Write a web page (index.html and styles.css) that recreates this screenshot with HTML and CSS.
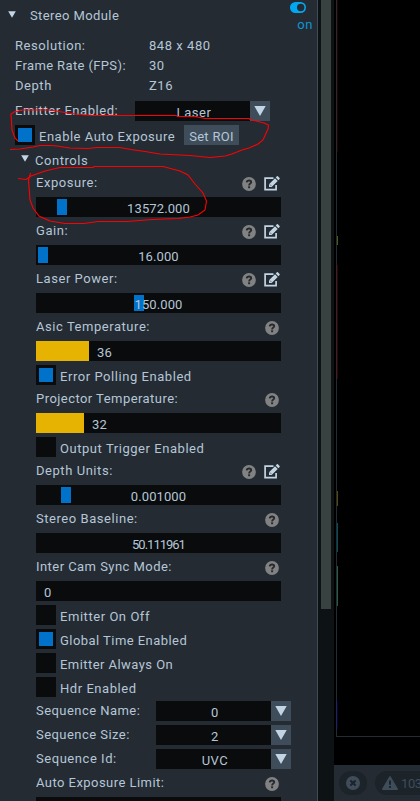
FILE: index.html
```html
<!DOCTYPE html>
<html lang="en">
<head>
<meta charset="utf-8">
<title>Stereo Module</title>
<link rel="stylesheet" href="styles.css">
</head>
<body>
<svg class="defs" aria-hidden="true">
  <symbol id="help" viewBox="0 0 14 14"><circle cx="7" cy="7" r="6.9" fill="#828282"/><path d="M4.700 5.400C4.900 3.900 5.800 3.500 7 3.500C8.300 3.500 9.200 4.200 9.200 5.200C9.200 6.600 7.100 6.500 7.100 8.400" fill="none" stroke="#242b33" stroke-width="1.900"/><path d="M6.100 9.300h2v1.900h-2z" fill="#242b33"/></symbol>
  <symbol id="edit" viewBox="0 0 16 15"><path d="M9.500 2.200H1.100v11.400h11V9" fill="none" stroke="#c3d5e5" stroke-width="1.700"/><path d="M5 8.200l6-6 2.700 2.700-6 6H5zM11.700 1.500l1.200-1.200q.5-.4 1 0l1.700 1.700q.4.500 0 1l-1.200 1.200z" fill="#c3d5e5"/><path d="M5.800 8.400l1.700 1.700" stroke="#242b33" stroke-width=".6"/></symbol>
  <symbol id="down" viewBox="0 0 12 10"><path d="M.3 0h11.400L6 10z" fill="#c3d5e5"/></symbol>
</svg>
<div class="app">
  <main class="panel">
    <header class="title"><svg class="tri"><use href="#down"/></svg><span class="name">Stereo Module</span>
      <div class="power"><svg viewBox="0 0 16 11"><rect width="16" height="11" rx="5.500" fill="#00a8f3"/><circle cx="10.700" cy="5.500" r="3.700" fill="#242b33"/></svg><span>on</span></div>
    </header>
    <dl class="info">
      <dt>Resolution:</dt><dd>848 x 480</dd>
      <dt class="fps">Frame Rate (FPS):</dt><dd>30</dd>
      <dt>Depth</dt><dd>Z16</dd>
    </dl>
    <div class="row emitter"><span class="label">Emitter Enabled:</span><div class="combo"><span>Laser</span><i><svg><use href="#down"/></svg></i></div></div>
    <div class="row check auto"><b class="box on"></b><span>Enable Auto Exposure</span><button>Set ROI</button></div>
    <div class="section"><svg class="tri"><use href="#down"/></svg><span>Controls</span></div>
    <section class="controls">
      <div class="row"><span class="label">Exposure:</span><svg class="help"><use href="#help"/></svg><svg class="edit"><use href="#edit"/></svg></div>
      <div class="row"><div class="bar"><em class="knob exposure"></em><span>13572.000</span></div></div>
      <div class="row"><span class="label">Gain:</span><svg class="help"><use href="#help"/></svg><svg class="edit"><use href="#edit"/></svg></div>
      <div class="row"><div class="bar"><em class="knob gain"></em><span>16.000</span></div></div>
      <div class="row"><span class="label">Laser Power:</span><svg class="help"><use href="#help"/></svg><svg class="edit"><use href="#edit"/></svg></div>
      <div class="row"><div class="bar"><em class="knob laser"></em><span>150.000</span></div></div>
      <div class="row"><span class="label">Asic Temperature:</span><svg class="help"><use href="#help"/></svg></div>
      <div class="row"><div class="bar meter"><em class="fill asic"></em><span>36</span></div></div>
      <div class="row check"><b class="box on"></b><span>Error Polling Enabled</span></div>
      <div class="row"><span class="label tight">Projector Temperature:</span><svg class="help"><use href="#help"/></svg></div>
      <div class="row"><div class="bar meter"><em class="fill projector"></em><span>32</span></div></div>
      <div class="row check"><b class="box"></b><span>Output Trigger Enabled</span></div>
      <div class="row"><span class="label">Depth Units:</span><svg class="help"><use href="#help"/></svg><svg class="edit"><use href="#edit"/></svg></div>
      <div class="row"><div class="bar"><em class="knob units"></em><span>0.001000</span></div></div>
      <div class="row"><span class="label">Stereo Baseline:</span><svg class="help"><use href="#help"/></svg></div>
      <div class="row"><div class="bar"><span class="baseline">50.111961</span></div></div>
      <div class="row"><span class="label tight">Inter Cam Sync Mode:</span><svg class="help"><use href="#help"/></svg></div>
      <div class="row"><div class="bar meter"><span>0</span></div></div>
      <div class="row check"><b class="box"></b><span>Emitter On Off</span></div>
      <div class="row check"><b class="box on"></b><span class="tight">Global Time Enabled</span></div>
      <div class="row check"><b class="box"></b><span class="tight">Emitter Always On</span></div>
      <div class="row check"><b class="box"></b><span>Hdr Enabled</span></div>
      <div class="row seq"><span class="label tight">Sequence Name:</span><div class="combo"><span>0</span><i><svg><use href="#down"/></svg></i></div></div>
      <div class="row seq"><span class="label tight">Sequence Size:</span><div class="combo"><span>2</span><i><svg><use href="#down"/></svg></i></div></div>
      <div class="row seq"><span class="label">Sequence Id:</span><div class="combo"><span>UVC</span><i><svg><use href="#down"/></svg></i></div></div>
      <div class="row"><span class="label tight">Auto Exposure Limit:</span><svg class="help"><use href="#help"/></svg></div>
      <div class="row"><div class="bar"></div></div>
    </section>
  </main>
  <div class="scroll"><div class="thumb"></div></div>
  <aside class="view">
    <div class="stream"><i class="edge red1"></i><i class="edge olive"></i><i class="edge red2"></i><i class="edge gold"></i><i class="edge teal"></i><i class="edge green"></i><i class="edge blue"></i></div>
    <footer>
      <div class="pill close"><svg width="14" height="14" viewBox="0 0 14 14"><circle cx="7" cy="7" r="7" fill="#3f4d5b"/><path d="M4.400 4.400l5.200 5.200M9.600 4.400L4.400 9.600" stroke="#1c2329" stroke-width="2.100"/></svg></div>
      <div class="pill warn"><svg width="16" height="14" viewBox="0 0 16 14"><path d="M8 .8L15.200 13.200H.8z" fill="#3f4d5b" stroke="#3f4d5b" stroke-width="1.500" stroke-linejoin="round"/><path d="M8 4.500v4.200M8 10v2" stroke="#1c2329" stroke-width="1.900"/></svg><span>103</span></div>
    </footer>
  </aside>
</div>
<svg class="marks" viewBox="0 0 420 801"><path d="M18 141L15 138 12 130 11 114 14 112 22 110H50L62 112 75 114 93 115.500H176L178 116.500H195L205 118.500H249L250 119.500 264 123 268.500 125 268 129 263 140 258 144 249 148 242 150 232 154 225 156 210 157.500 190 155.500 160 154 145 151.500 131 149.500 120 147.500 97 147.500 88 148.500 70 148 57 146 52 145.500H40L33 147 20 149 10 149.500"/><path d="M18 178.500L26 179.500 31 176 45 171 60 167.500 93 167.500 94 166.500H163L180 171 188 175 195 184 203 193 206.500 201 205 210 198 215 190 217 178 218.500 152 219.500 127 221.500H98L84 223.500H65L50 221 39 216 33 208 30 200 28.500 180 30.500 173"/></svg>
</body>
</html>
```
FILE: styles.css
```css
* { box-sizing: border-box; }
html, body { margin: 0; height: 801px; overflow: hidden; background: #000; }
body { font: 13px/16px Roboto, "Liberation Sans", sans-serif; letter-spacing: .55px; color: #b5c6d6; }
svg { display: block; flex: none; }
.defs { position: absolute; width: 0; height: 0; }
.app { display: flex; width: 420px; height: 801px; overflow: hidden; }
.panel { width: 318px; flex: none; background: #242b33; border-right: 1px solid #3f4d5b; white-space: nowrap; overflow: hidden; }
.title { height: 38px; display: flex; align-items: flex-start; padding: 0 4px 0 8px; }
.tri { width: 8px; height: 7px; }
.title .tri { margin-top: 11px; }
.name { margin: 8px 0 0 14px; letter-spacing: .4px; }
.power { margin-left: auto; display: flex; flex-direction: column; align-items: flex-end; color: #0c96d2; }
.power svg { width: 16px; height: 11px; margin: 2px 7px 4px 0; }
.info { margin: 0; padding-left: 15px; display: grid; grid-template-columns: 134px auto; grid-auto-rows: 20px; height: 61px; line-height: 16px; }
.info dd { margin: 0; }
.info .fps { letter-spacing: .38px; }
.row { height: 24px; padding: 2px 36px 2px 36px; display: flex; }
.label { height: 20px; padding-top: 2px; margin-right: auto; }
.tight { letter-spacing: .45px; }
.help { width: 14px; height: 14px; margin: 4px 2px 0 0; }
.edit { width: 16px; height: 15px; margin: 3px 1px 0 6px; }
.emitter { padding: 2px 47px 2px 15px; }
.combo { display: flex; width: 135px; height: 20px; background: #090b0d; }
.combo span { flex: 1; text-align: center; padding: 4px 0 0 3px; }
.combo i { width: 20px; background: #3f4d5b; padding: 5px 4px; }
.combo i svg { width: 12px; height: 10px; }
.check span { padding: 4px 0 0 4px; }
.box { width: 20px; height: 20px; flex: none; background: #090b0d; padding: 3px; }
.box.on::before { content: ""; display: block; height: 14px; background: #0072ca; }
.auto { padding-left: 15px; }
.auto span { width: 149px; letter-spacing: .5px; }
button { width: 55px; height: 20px; border: 0; padding: 4px 0 0; background: #3f4d5b; font: inherit; letter-spacing: .3px; line-height: 16px; color: inherit; }
.section { height: 24px; display: flex; padding: 6px 0 0 21px; }
.section .tri { margin-top: 2px; }
.section span { margin-left: 6px; }
.bar { position: relative; width: 245px; height: 20px; background: #090b0d; padding-top: 4px; text-align: center; letter-spacing: .1px; }
.bar span { position: relative; }
.bar .baseline { letter-spacing: -1px; }
.knob { position: absolute; top: 2px; width: 10px; height: 16px; background: #0072ca; }
.exposure { left: 21px; }
.gain { left: 2px; }
.laser { left: 98px; }
.units { left: 25px; }
.meter { display: flex; padding: 0; }
.meter span { padding: 4px 0 0 8px; }
.fill { background: #e7b302; }
.asic { width: 53px; }
.projector { width: 48px; }
.seq { padding-right: 26px; }
.scroll { width: 16px; flex: none; background: #0d1214; padding-left: 3px; }
.thumb { width: 10px; height: 609px; background: #374241; }
.view { flex: 1; padding-left: 2px; background: #000; display: flex; flex-direction: column; }
.stream { position: relative; height: 737px; border: solid #242b33; border-width: 0 0 1px 1px; }
.edge { position: absolute; left: 0; width: 1px; }
.red1 { top: 0; height: 152px; background: #260303; }
.olive { top: 236px; height: 9px; background: #54591a; }
.red2 { top: 265px; height: 114px; background: #3d0000; }
.gold { top: 491px; height: 15px; background: #574a07; }
.teal { top: 523px; height: 29px; background: #07505a; }
.green { top: 566px; height: 40px; background: #285c45; }
.blue { top: 701px; height: 28px; background: #00004f; }
footer { margin: 28px 0 0 -2px; height: 36px; background: #242b33; padding: 6px 0 0 5px; display: flex; gap: 8px; color: #3f4d5b; overflow: hidden; }
.pill { height: 24px; flex: none; border-radius: 12px; background: #1c2329; display: flex; align-items: center; }
.close { width: 28px; justify-content: center; }
.warn { width: 70px; padding-left: 7px; gap: 3px; letter-spacing: -.4px; }
.warn span { padding-top: 2px; }
.marks { position: absolute; left: 0; top: 0; width: 420px; height: 801px; fill: none; stroke: #f00; stroke-width: 1.100; pointer-events: none; }
```
